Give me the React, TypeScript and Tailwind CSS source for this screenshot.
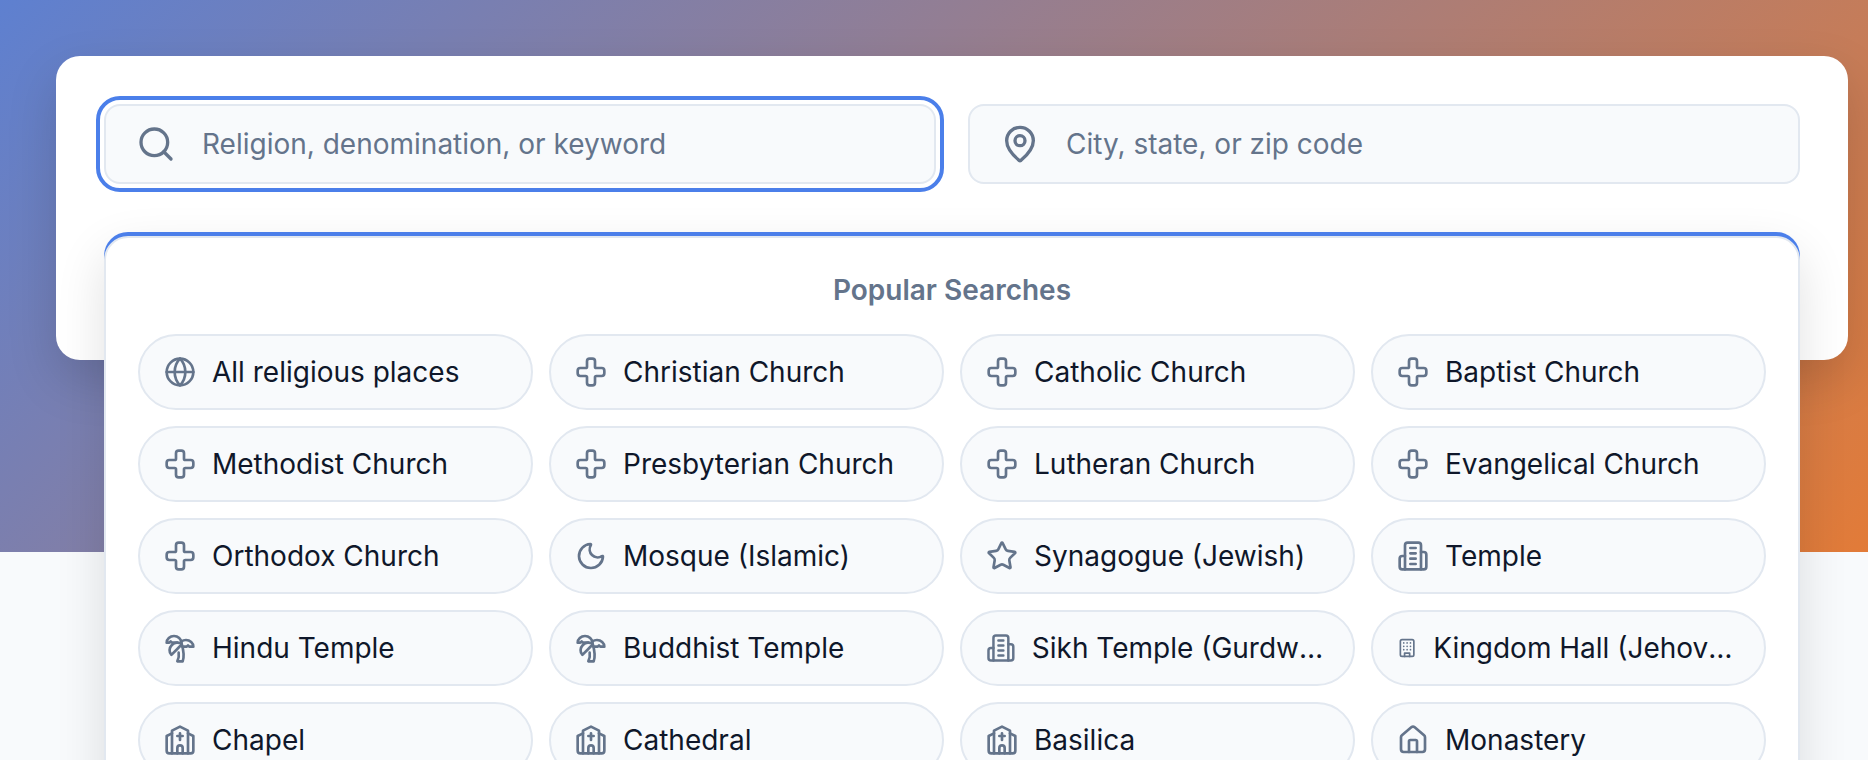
import { Cross, Globe, House, MapPin, Moon, Search, Star, TreePalm } from "lucide-react";
import type { SVGProps } from "react";

type IconProps = SVGProps<SVGSVGElement>;

function Outline({ children, ...props }: IconProps) {
  return (
    <svg
      viewBox="0 0 24 24"
      fill="none"
      stroke="currentColor"
      strokeWidth="2"
      strokeLinecap="round"
      strokeLinejoin="round"
      {...props}
    >
      {children}
    </svg>
  );
}

function TempleIcon(props: IconProps) {
  return (
    <Outline {...props}>
      <path d="M6 22V4a2 2 0 0 1 2-2h8a2 2 0 0 1 2 2v18Z" />
      <path d="M6 12H4a2 2 0 0 0-2 2v6a2 2 0 0 0 2 2h2" />
      <path d="M18 9h2a2 2 0 0 1 2 2v9a2 2 0 0 1-2 2h-2" />
      <path d="M10 6h4M10 10h4M10 14h4M10 18h4" />
    </Outline>
  );
}

function HallIcon(props: IconProps) {
  return (
    <Outline {...props}>
      <rect x="4" y="2" width="16" height="20" rx="2" />
      <path d="M9 22v-4h6v4" />
      <path d="M8 6h.01M16 6h.01M12 6h.01M12 10h.01M12 14h.01M16 10h.01M16 14h.01M8 10h.01M8 14h.01" />
    </Outline>
  );
}

function ChurchIcon(props: IconProps) {
  return (
    <Outline {...props}>
      <path d="m18 7 4 2v11a2 2 0 0 1-2 2H4a2 2 0 0 1-2-2V9l4-2" />
      <path d="M14 22v-4a2 2 0 0 0-4 0v4" />
      <path d="M18 22V5l-6-3-6 3v17" />
      <path d="M12 7v5M10 9h4" />
    </Outline>
  );
}

const popular = [
  { label: "All religious places", icon: Globe },
  { label: "Christian Church", icon: Cross },
  { label: "Catholic Church", icon: Cross },
  { label: "Baptist Church", icon: Cross },
  { label: "Methodist Church", icon: Cross },
  { label: "Presbyterian Church", icon: Cross },
  { label: "Lutheran Church", icon: Cross },
  { label: "Evangelical Church", icon: Cross },
  { label: "Orthodox Church", icon: Cross },
  { label: "Mosque (Islamic)", icon: Moon },
  { label: "Synagogue (Jewish)", icon: Star },
  { label: "Temple", icon: TempleIcon },
  { label: "Hindu Temple", icon: TreePalm },
  { label: "Buddhist Temple", icon: TreePalm },
  { label: "Sikh Temple (Gurdwara)", icon: TempleIcon },
  { label: "Kingdom Hall (Jehovah's Witnesses)", icon: HallIcon },
  { label: "Chapel", icon: ChurchIcon },
  { label: "Cathedral", icon: ChurchIcon },
  { label: "Basilica", icon: ChurchIcon },
  { label: "Monastery", icon: House },
];

export default function App() {
  return (
    <div className="relative h-[760px] overflow-hidden bg-[#f8fafc] font-['Inter',sans-serif]">
      {/* Hero */}
      <div className="h-[552px] bg-[linear-gradient(135deg,#5e80d0,#e27b38)] pl-14 pr-5 pt-14">
        <div className="relative h-[304px] rounded-3xl bg-white p-12 shadow-[0_20px_50px_rgba(0,0,0,0.15)]">
          <div className="grid grid-cols-2 gap-8">
            <label className="flex h-20 items-center gap-[26px] rounded-2xl border-2 border-[#e2e8f0] bg-[#f8fafc] pl-[30px] pr-6 outline-4 outline-offset-4 outline-[#4b7fea]">
              <Search className="h-10 w-10 shrink-0 text-[#64748b]" />
              <input
                placeholder="Religion, denomination, or keyword"
                className="w-full bg-transparent text-[28px] text-[#0f172a] outline-none placeholder:text-[#64748b]"
              />
            </label>
            <label className="flex h-20 items-center gap-[26px] rounded-2xl border-2 border-[#e2e8f0] bg-[#f8fafc] pl-[30px] pr-6">
              <MapPin className="h-10 w-10 shrink-0 text-[#64748b]" />
              <input
                placeholder="City, state, or zip code"
                className="w-full bg-transparent text-[28px] text-[#0f172a] outline-none placeholder:text-[#64748b]"
              />
            </label>
          </div>

          {/* Dropdown */}
          <div className="absolute left-12 right-12 top-[176px] z-10 rounded-3xl bg-[#4b7fea] pt-1 shadow-[0_20px_50px_rgba(0,0,0,0.12)]">
            <div className="rounded-3xl border-2 border-[#e2e8f0] bg-white px-8 pb-8 pt-8">
              <p className="mb-6 text-center text-[28px] font-semibold leading-10 text-[#64748b]">
                Popular Searches
              </p>
              <div className="grid grid-cols-4 gap-4">
                {popular.map((item) => {
                  const Icon = item.icon;
                  return (
                    <button
                      key={item.label}
                      className="flex h-[76px] items-center gap-4 rounded-[38px] border-2 border-[#e2e8f0] bg-[#f8fafc] px-6 text-left"
                    >
                      <Icon className="h-8 w-8 text-[#64748b]" />
                      <span className="truncate text-[28px] text-[#0f172a]">{item.label}</span>
                    </button>
                  );
                })}
              </div>
            </div>
          </div>
        </div>
      </div>
    </div>
  );
}
